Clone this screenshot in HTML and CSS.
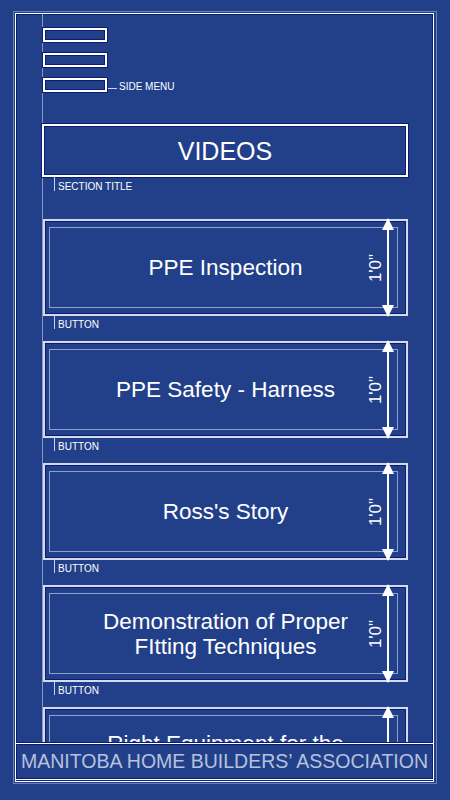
FILE: index.html
```html
<!DOCTYPE html>
<html lang="en">
<head>
  <meta charset="UTF-8">
  <title>Videos</title>
  <link rel="stylesheet" href="styles.css">
</head>
<body>

  <div class="frame">
    <div class="sheet">
      <div class="guide"></div>

      <!-- Side menu icon -->
      <div class="side-menu">
        <div class="menu-bar"></div>
        <div class="menu-bar"></div>
        <div class="menu-row">
          <div class="menu-bar"></div>
          <span class="leader"></span>
          <span class="note">SIDE MENU</span>
        </div>
      </div>

      <!-- Section title -->
      <div class="section-title">VIDEOS</div>
      <div class="tag"><span class="tick"></span>SECTION TITLE</div>

      <!-- Video buttons -->
      <div class="list">
        <div class="item">
          <div class="btn">
            <div class="btn-inner">PPE Inspection</div>
            <div class="dim"><span class="dim-text">1'0"</span></div>
          </div>
          <div class="tag"><span class="tick"></span>BUTTON</div>
        </div>
        <div class="item">
          <div class="btn">
            <div class="btn-inner">PPE Safety - Harness</div>
            <div class="dim"><span class="dim-text">1'0"</span></div>
          </div>
          <div class="tag"><span class="tick"></span>BUTTON</div>
        </div>
        <div class="item">
          <div class="btn">
            <div class="btn-inner">Ross's Story</div>
            <div class="dim"><span class="dim-text">1'0"</span></div>
          </div>
          <div class="tag"><span class="tick"></span>BUTTON</div>
        </div>
        <div class="item">
          <div class="btn">
            <div class="btn-inner">Demonstration of Proper<br>FItting Techniques</div>
            <div class="dim"><span class="dim-text">1'0"</span></div>
          </div>
          <div class="tag"><span class="tick"></span>BUTTON</div>
        </div>
        <div class="item">
          <div class="btn">
            <div class="btn-inner">Right Equipment for the<br>Job</div>
            <div class="dim"><span class="dim-text">1'0"</span></div>
          </div>
        </div>
      </div>

      <!-- Footer banner -->
      <div class="footer">MANITOBA HOME BUILDERS&rsquo; ASSOCIATION</div>
    </div>
  </div>

</body>
</html>
```

FILE: styles.css
```css
* {
  box-sizing: border-box;
  margin: 0;
  padding: 0;
}

body {
  font-family: "Liberation Sans", Arial, sans-serif;
  background-color: #22408a;
  color: #fff;
  height: 800px;
  overflow: hidden;
}

/* Drawing frame */
.frame {
  margin: 11px 0 0 13px;
  width: 424px;
  height: 773px;
  border: 1px solid #6b7fb6;
  padding: 1px 2px 1px 1px;
}

.sheet {
  position: relative;
  height: 100%;
  border: 1px solid #fff;
  box-shadow: inset 0 0 0 1px #0d1c73;
  padding: 14px 0 0 26px;
  overflow: hidden;
}

.guide {
  position: absolute;
  left: 26px;
  top: 0;
  bottom: 0;
  width: 1px;
  background-color: #8797c4;
}

/* Side menu */
.side-menu {
  position: relative;
  display: flex;
  flex-direction: column;
  gap: 11px;
  margin-left: 1px;
}

.menu-row {
  display: flex;
  align-items: flex-end;
}

.menu-bar {
  width: 64px;
  height: 14px;
  border: 2px solid #fff;
  background-color: #22408a;
  box-shadow: 0 0 0 1px #0d1c73, inset 0 0 0 1px #0d1c73;
}

.leader {
  width: 9px;
  height: 1px;
  background-color: #c9d2ea;
  margin: 0 2px 3px 1px;
}

.note {
  font-size: 10px;
  line-height: 10px;
  color: #fff;
}

/* Section title */
.section-title {
  position: relative;
  margin-top: 32px;
  width: 366px;
  height: 53px;
  border: 2px solid #fff;
  background-color: #22408a;
  box-shadow: 0 0 0 1px #0d1c73, inset 0 0 0 1px #0d1c73;
  display: flex;
  justify-content: center;
  align-items: center;
  font-size: 25px;
  padding-top: 1px;
}

.tag {
  position: relative;
  display: flex;
  align-items: flex-end;
  height: 15px;
  font-size: 10px;
  line-height: 10px;
  color: #fff;
  padding-left: 12px;
}

.tick {
  width: 1px;
  height: 14px;
  background-color: #c9d2ea;
  margin-right: 3px;
  align-self: flex-start;
}

/* Buttons */
.list {
  position: relative;
  display: flex;
  flex-direction: column;
  gap: 11px;
  margin-top: 27px;
  margin-left: 1px;
}

.btn {
  position: relative;
  width: 365px;
  height: 97px;
  border: 2px solid #d3daee;
  background-color: #22408a;
  box-shadow: inset 0 0 0 1px #0d1c73;
  padding: 6px 8px 6px 4px;
}

.btn-inner {
  height: 100%;
  border: 1px solid #8ea0d2;
  display: flex;
  justify-content: center;
  align-items: center;
  text-align: center;
  font-size: 22.5px;
  line-height: 25px;
  padding-left: 4px;
}

.item .tag {
  margin-top: -1px;
  padding-left: 11px;
}

/* Dimension arrow */
.dim {
  position: absolute;
  right: 17px;
  top: -2px;
  bottom: -2px;
  width: 2px;
  background-color: #fff;
}

.dim::before,
.dim::after {
  content: "";
  position: absolute;
  left: -5px;
  border-left: 6px solid transparent;
  border-right: 6px solid transparent;
}

.dim::before {
  top: -1px;
  border-bottom: 12px solid #fff;
}

.dim::after {
  bottom: -1px;
  border-top: 12px solid #fff;
}

.dim-text {
  position: absolute;
  top: 50%;
  left: -11px;
  transform: translate(-50%, -50%) rotate(-90deg);
  font-size: 17px;
  white-space: nowrap;
}

/* Footer banner */
.footer {
  position: absolute;
  left: -1px;
  right: -1px;
  bottom: 1px;
  height: 37px;
  border: 1px solid #fff;
  background-color: #22408a;
  box-shadow: 0 0 0 1px #0d1c73, inset 0 0 0 1px #0d1c73;
  color: #b6c2de;
  font-size: 19.5px;
  display: flex;
  justify-content: center;
  align-items: center;
  white-space: nowrap;
}
```
